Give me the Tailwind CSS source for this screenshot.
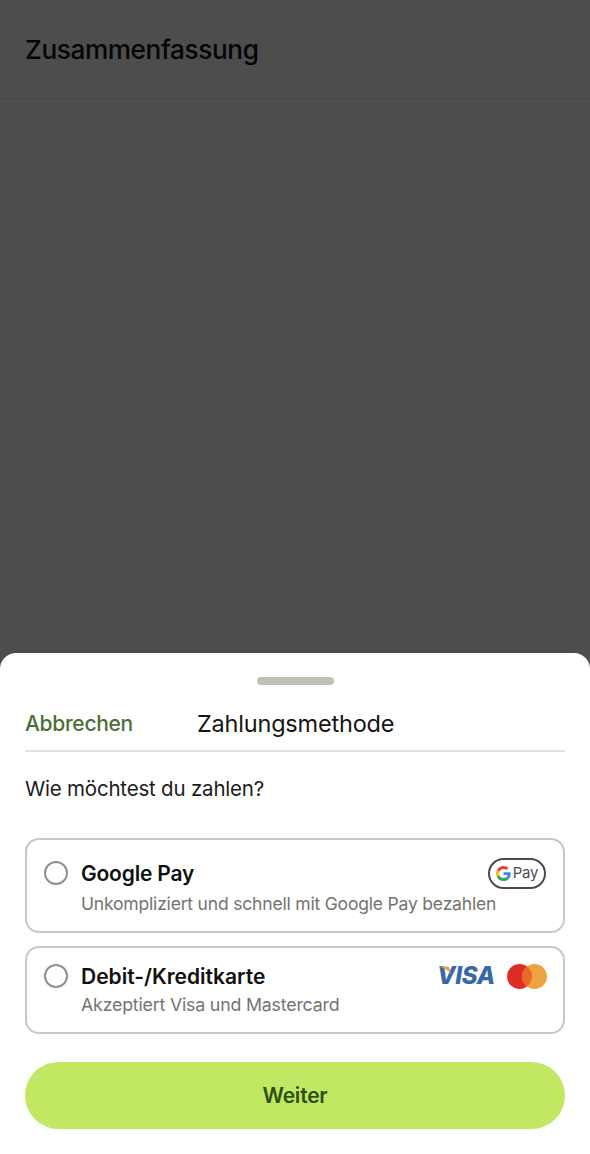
<!DOCTYPE html>
<html lang="de">
<head>
    <meta charset="UTF-8">
    <meta name="viewport" content="width=device-width, initial-scale=1.0">
    <title>Zahlungsmethode</title>
    <script src="https://cdn.jsdelivr.net/npm/@tailwindcss/browser@4"></script>
</head>
<body class="w-[590px] h-[1154px] overflow-hidden flex flex-col bg-[#4d4d4d] font-['Inter',sans-serif]">

<!-- abgedunkelter Hintergrund -->
<header class="h-[99px] shrink-0 flex items-center px-[25px] pt-[2px] border-b border-[#474747]">
    <h1 class="text-[26.200px] font-medium text-[#050505] tracking-[-0.4px]">Zusammenfassung</h1>
</header>
<div class="h-[554px] shrink-0"></div>

<!-- Bottom sheet -->
<section class="flex-1 bg-white rounded-t-[16px] px-[25px] flex flex-col">
    <div class="mt-[24px] self-center w-[77px] h-[8px] rounded-full bg-[#bfc0b6]"></div>

    <div class="mt-[20px] h-[47px] flex items-center relative border-b-2 border-[#e2e2e2] pb-[8px]">
        <span class="text-[21px] font-medium text-[#4a7035] tracking-[-0.3px]">Abbrechen</span>
        <span class="absolute left-[172px] top-[1px] text-[23.500px] text-[#141414] tracking-[-0.2px]">Zahlungsmethode</span>
    </div>

    <p class="mt-[23px] text-[20.500px] leading-[28px] text-[#1c1c1c] tracking-[-0.2px]">Wie möchtest du zahlen?</p>

    <div class="mt-[35px] h-[95px] border-2 border-[#c8c8c6] rounded-[14px] pl-[17px] pr-[18px] pt-[20px] flex gap-[13px]">
        <span class="w-[24px] h-[24px] shrink-0 mt-[1px] rounded-full border-2 border-[#90908d]"></span>
        <div class="flex-1 min-w-0">
            <div class="flex items-center justify-between h-[24px]">
                <span class="pt-[3px] text-[21px] font-semibold text-[#111] tracking-[-0.2px]">Google Pay</span>
                <span class="w-[58px] h-[31px] -mr-[1px] mt-[2px] rounded-full border-2 border-[#4a4a4a] flex items-center justify-center gap-[2px]">
                    <svg width="15" height="15" viewBox="0 0 48 48">
                        <path fill="#EA4335" d="M24 9.500c3.500 0 6.700 1.300 9.100 3.400l6.800-6.800C35.800 2.400 30.200 0 24 0 14.600 0 6.500 5.400 2.600 13.200l7.900 6.100C12.400 13.700 17.700 9.500 24 9.500z"/>
                        <path fill="#4285F4" d="M47 24.500c0-1.600-.1-3.100-.4-4.500H24v9h13c-.6 3-2.300 5.500-4.800 7.200l7.700 6C44.400 38 47 31.900 47 24.500z"/>
                        <path fill="#FBBC05" d="M10.500 28.700A14.500 14.500 0 0 1 10.500 19.300l-7.900-6.100a24 24 0 0 0 0 21.600z"/>
                        <path fill="#34A853" d="M24 48c6.500 0 11.900-2.100 15.900-5.800l-7.700-6c-2.200 1.400-4.900 2.300-8.200 2.300-6.300 0-11.600-4.200-13.500-9.800l-7.900 6.100C6.500 42.600 14.600 48 24 48z"/>
                    </svg>
                    <span class="text-[15px] text-[#4f4f4f] tracking-[-0.2px]">Pay</span>
                </span>
            </div>
            <p class="mt-[8px] text-[17.550px] leading-[24px] text-[#74746f] tracking-[-0.2px] whitespace-nowrap">Unkompliziert und schnell mit Google Pay bezahlen</p>
        </div>
    </div>

    <div class="mt-[13px] h-[88px] border-2 border-[#c8c8c6] rounded-[14px] pl-[17px] pr-[16px] pt-[16px] flex gap-[13px]">
        <span class="w-[24px] h-[24px] shrink-0 rounded-full border-2 border-[#90908d]"></span>
        <div class="flex-1 min-w-0">
            <div class="flex items-center justify-between h-[24px]">
                <span class="pt-[2px] text-[21px] font-semibold text-[#111]">Debit-/Kreditkarte</span>
                <span class="flex items-center gap-[12px]">
                    <span class="relative w-[57px] h-[22px] flex items-center justify-end">
                        <svg class="absolute left-0 top-[1px]" width="16" height="10" viewBox="0 0 16 10"><path fill="#e0a33e" d="M0 0.500h9c1.500 0 2.200.7 2.600 2L13 8C10.500 4 5 1.500 0 0.500z"/></svg>
                        <span class="text-[24px] leading-[22px] font-extrabold italic text-[#3a68a6] tracking-[-0.3px]">VISA</span>
                    </span>
                    <svg width="40" height="25" viewBox="0 0 40 25">
                        <circle cx="12.500" cy="12.500" r="12.500" fill="#dc2e26"/>
                        <circle cx="27.500" cy="12.500" r="12.500" fill="#eda33f"/>
                        <path fill="#e9682b" d="M20 2.500a12.500 12.500 0 0 1 0 20 12.500 12.500 0 0 1 0-20z"/>
                    </svg>
                </span>
            </div>
            <p class="mt-[5px] text-[17.800px] leading-[24px] text-[#74746f] tracking-[-0.2px] whitespace-nowrap">Akzeptiert Visa und Mastercard</p>
        </div>
    </div>

    <button class="mt-[28px] h-[67px] rounded-full bg-[#c1e763] text-[21px] font-semibold text-[#2d5010] tracking-[-0.2px]">Weiter</button>
</section>

</body>
</html>
